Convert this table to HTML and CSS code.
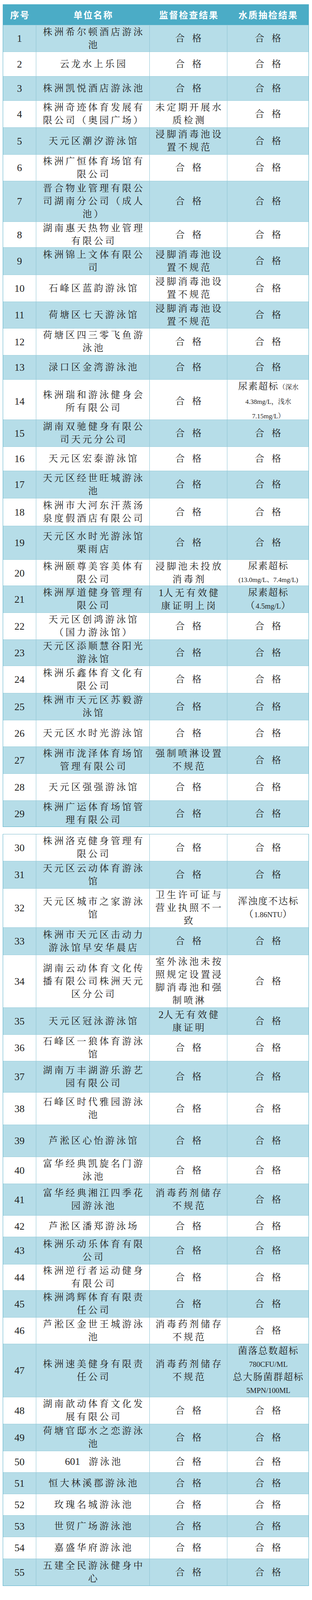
FILE: index.html
```html
<!DOCTYPE html>
<html lang="zh-CN">
<head>
<meta charset="utf-8">
<title>游泳场所监督检查结果</title>
<link rel="stylesheet" href="styles.css">
</head>
<body>
<div class="sheet">
<div class="tbl t1">
<div class="row head"><div class="c"><p>序号</p></div><div class="c"><p>单位名称</p></div><div class="c"><p>监督检查结果</p></div><div class="c"><p>水质抽检结果</p></div></div>
<div class="row odd h68"><div class="c no"><p>1</p></div><div class="c nm"><p>株洲希尔顿酒店游泳<br>池</p></div><div class="c ck"><p class="ok">合 格</p></div><div class="c wq"><p class="ok">合 格</p></div></div>
<div class="row h63"><div class="c no"><p>2</p></div><div class="c nm"><p>云龙水上乐园</p></div><div class="c ck"><p class="ok">合 格</p></div><div class="c wq"><p class="ok">合 格</p></div></div>
<div class="row odd h62"><div class="c no"><p>3</p></div><div class="c nm"><p>株洲凯悦酒店游泳池</p></div><div class="c ck"><p class="ok">合 格</p></div><div class="c wq"><p class="ok">合 格</p></div></div>
<div class="row h69"><div class="c no"><p>4</p></div><div class="c nm"><p>株洲奇迹体育发展有<br>限公司（奥园广场）</p></div><div class="c ck"><p>未定期开展水<br>质检测</p></div><div class="c wq"><p class="ok">合 格</p></div></div>
<div class="row odd h69"><div class="c no"><p>5</p></div><div class="c nm"><p>天元区潮汐游泳馆</p></div><div class="c ck"><p>浸脚消毒池设<br>置不规范</p></div><div class="c wq"><p class="ok">合 格</p></div></div>
<div class="row h68"><div class="c no"><p>6</p></div><div class="c nm"><p>株洲广恒体育场馆有<br>限公司</p></div><div class="c ck"><p class="ok">合 格</p></div><div class="c wq"><p class="ok">合 格</p></div></div>
<div class="row odd h104"><div class="c no"><p>7</p></div><div class="c nm"><p>晋合物业管理有限公<br>司湖南分公司（成人<br>池）</p></div><div class="c ck"><p class="ok">合 格</p></div><div class="c wq"><p class="ok">合 格</p></div></div>
<div class="row h66"><div class="c no"><p>8</p></div><div class="c nm"><p>湖南惠天热物业管理<br>有限公司</p></div><div class="c ck"><p class="ok">合 格</p></div><div class="c wq"><p class="ok">合 格</p></div></div>
<div class="row odd h70"><div class="c no"><p>9</p></div><div class="c nm"><p>株洲锦上文体有限公<br>司</p></div><div class="c ck"><p>浸脚消毒池设<br>置不规范</p></div><div class="c wq"><p class="ok">合 格</p></div></div>
<div class="row h69"><div class="c no"><p>10</p></div><div class="c nm"><p>石峰区蓝韵游泳馆</p></div><div class="c ck"><p>浸脚消毒池设<br>置不规范</p></div><div class="c wq"><p class="ok">合 格</p></div></div>
<div class="row odd h68"><div class="c no"><p>11</p></div><div class="c nm"><p>荷塘区七天游泳馆</p></div><div class="c ck"><p>浸脚消毒池设<br>置不规范</p></div><div class="c wq"><p class="ok">合 格</p></div></div>
<div class="row h69"><div class="c no"><p>12</p></div><div class="c nm"><p>荷塘区四三零飞鱼游<br>泳池</p></div><div class="c ck"><p class="ok">合 格</p></div><div class="c wq"><p class="ok">合 格</p></div></div>
<div class="row odd h62"><div class="c no"><p>13</p></div><div class="c nm"><p>渌口区金湾游泳池</p></div><div class="c ck"><p class="ok">合 格</p></div><div class="c wq"><p class="ok">合 格</p></div></div>
<div class="row h103"><div class="c no"><p>14</p></div><div class="c nm"><p>株洲瑞和游泳健身会<br>所有限公司</p></div><div class="c ck"><p class="ok">合 格</p></div><div class="c wq"><p class="tight">尿素超标<span class="sm">（深水</span><br><span class="sm">4.38mg/L，浅水</span><br><span class="sm">7.15mg/L）</span></p></div></div>
<div class="row odd h69"><div class="c no"><p>15</p></div><div class="c nm"><p>湖南双驰健身有限公<br>司天元分公司</p></div><div class="c ck"><p class="ok">合 格</p></div><div class="c wq"><p class="ok">合 格</p></div></div>
<div class="row h62"><div class="c no"><p>16</p></div><div class="c nm"><p>天元区宏泰游泳馆</p></div><div class="c ck"><p class="ok">合 格</p></div><div class="c wq"><p class="ok">合 格</p></div></div>
<div class="row odd h70"><div class="c no"><p>17</p></div><div class="c nm"><p>天元区经世旺城游泳<br>池</p></div><div class="c ck"><p class="ok">合 格</p></div><div class="c wq"><p class="ok">合 格</p></div></div>
<div class="row h71"><div class="c no"><p>18</p></div><div class="c nm"><p>株洲市大河东汗蒸汤<br>泉度假酒店有限公司</p></div><div class="c ck"><p class="ok">合 格</p></div><div class="c wq"><p class="ok">合 格</p></div></div>
<div class="row odd h86"><div class="c no"><p>19</p></div><div class="c nm"><p>天元区水时光游泳馆<br>栗雨店</p></div><div class="c ck"><p class="ok">合 格</p></div><div class="c wq"><p class="ok">合 格</p></div></div>
<div class="row h67"><div class="c no"><p>20</p></div><div class="c nm"><p>株洲颐尊美容美体有<br>限公司</p></div><div class="c ck"><p>浸脚池未投放<br>消毒剂</p></div><div class="c wq"><p>尿素超标<br><span class="sm">(13.0mg/L、7.4mg/L)</span></p></div></div>
<div class="row odd h69"><div class="c no"><p>21</p></div><div class="c nm"><p>株洲厚道健身管理有<br>限公司</p></div><div class="c ck"><p><span class="dg">1</span>人无有效健<br>康证明上岗</p></div><div class="c wq"><p>尿素超标<br>（<span class="lat">4.5mg/L</span>）</p></div></div>
<div class="row h69"><div class="c no"><p>22</p></div><div class="c nm"><p>天元区创鸿游泳馆<br>（国力游泳馆）</p></div><div class="c ck"><p class="ok">合 格</p></div><div class="c wq"><p class="ok">合 格</p></div></div>
<div class="row odd h67"><div class="c no"><p>23</p></div><div class="c nm"><p>天元区添顺慧谷阳光<br>游泳馆</p></div><div class="c ck"><p class="ok">合 格</p></div><div class="c wq"><p class="ok">合 格</p></div></div>
<div class="row h70"><div class="c no"><p>24</p></div><div class="c nm"><p>株洲乐鑫体育文化有<br>限公司</p></div><div class="c ck"><p class="ok">合 格</p></div><div class="c wq"><p class="ok">合 格</p></div></div>
<div class="row odd h69"><div class="c no"><p>25</p></div><div class="c nm"><p>株洲市天元区苏毅游<br>泳馆</p></div><div class="c ck"><p class="ok">合 格</p></div><div class="c wq"><p class="ok">合 格</p></div></div>
<div class="row h68"><div class="c no"><p>26</p></div><div class="c nm"><p>天元区水时光游泳馆</p></div><div class="c ck"><p class="ok">合 格</p></div><div class="c wq"><p class="ok">合 格</p></div></div>
<div class="row odd h69"><div class="c no"><p>27</p></div><div class="c nm"><p>株洲市泷泽体育场馆<br>管理有限公司</p></div><div class="c ck"><p>强制喷淋设置<br>不规范</p></div><div class="c wq"><p class="ok">合 格</p></div></div>
<div class="row h69"><div class="c no"><p>28</p></div><div class="c nm"><p>天元区强强游泳馆</p></div><div class="c ck"><p class="ok">合 格</p></div><div class="c wq"><p class="ok">合 格</p></div></div>
<div class="row odd h67 last"><div class="c no"><p>29</p></div><div class="c nm"><p>株洲广运体育场馆管<br>理有限公司</p></div><div class="c ck"><p class="ok">合 格</p></div><div class="c wq"><p class="ok">合 格</p></div></div>
</div>

<div class="tbl t2">
<div class="row h69"><div class="c no"><p>30</p></div><div class="c nm"><p>株洲洛克健身管理有<br>限公司</p></div><div class="c ck"><p class="ok">合 格</p></div><div class="c wq"><p class="ok">合 格</p></div></div>
<div class="row odd h70"><div class="c no"><p>31</p></div><div class="c nm"><p>天元区云动体育游泳<br>馆</p></div><div class="c ck"><p class="ok">合 格</p></div><div class="c wq"><p class="ok">合 格</p></div></div>
<div class="row h100"><div class="c no"><p>32</p></div><div class="c nm"><p>天元区城市之家游泳<br>馆</p></div><div class="c ck"><p>卫生许可证与<br>营业执照不一<br>致</p></div><div class="c wq"><p>浑浊度不达标<br>（<span class="lat">1.86NTU</span>）</p></div></div>
<div class="row odd h70"><div class="c no"><p>33</p></div><div class="c nm"><p>株洲市天元区击动力<br>游泳馆早安华晨店</p></div><div class="c ck"><p class="ok">合 格</p></div><div class="c wq"><p class="ok">合 格</p></div></div>
<div class="row h135"><div class="c no"><p>34</p></div><div class="c nm"><p>湖南云动体育文化传<br>播有限公司株洲天元<br>区分公司</p></div><div class="c ck"><p>室外泳池未按<br>照规定设置浸<br>脚消毒池和强<br>制喷淋</p></div><div class="c wq"><p class="ok">合 格</p></div></div>
<div class="row odd h69"><div class="c no"><p>35</p></div><div class="c nm"><p>天元区冠泳游泳馆</p></div><div class="c ck"><p><span class="dg">2</span>人无有效健<br>康证明</p></div><div class="c wq"><p class="ok">合 格</p></div></div>
<div class="row h68"><div class="c no"><p>36</p></div><div class="c nm"><p>石峰区一狼体育游泳<br>馆</p></div><div class="c ck"><p class="ok">合 格</p></div><div class="c wq"><p class="ok">合 格</p></div></div>
<div class="row odd h80"><div class="c no"><p>37</p></div><div class="c nm"><p>湖南万丰湖游乐游艺<br>园有限公司</p></div><div class="c ck"><p class="ok">合 格</p></div><div class="c wq"><p class="ok">合 格</p></div></div>
<div class="row h83"><div class="c no"><p>38</p></div><div class="c nm"><p>石峰区时代雅园游泳<br>池</p></div><div class="c ck"><p class="ok">合 格</p></div><div class="c wq"><p class="ok">合 格</p></div></div>
<div class="row odd h82"><div class="c no"><p>39</p></div><div class="c nm"><p>芦淞区心怡游泳馆</p></div><div class="c ck"><p class="ok">合 格</p></div><div class="c wq"><p class="ok">合 格</p></div></div>
<div class="row h69"><div class="c no"><p>40</p></div><div class="c nm"><p>富华经典凯旋名门游<br>泳池</p></div><div class="c ck"><p class="ok">合 格</p></div><div class="c wq"><p class="ok">合 格</p></div></div>
<div class="row odd h81"><div class="c no"><p>41</p></div><div class="c nm"><p>富华经典湘江四季花<br>园游泳池</p></div><div class="c ck"><p>消毒药剂储存<br>不规范</p></div><div class="c wq"><p class="ok">合 格</p></div></div>
<div class="row h55"><div class="c no"><p>42</p></div><div class="c nm"><p>芦淞区潘郑游泳场</p></div><div class="c ck"><p class="ok">合 格</p></div><div class="c wq"><p class="ok">合 格</p></div></div>
<div class="row odd h70"><div class="c no"><p>43</p></div><div class="c nm"><p>株洲乐动乐体育有限<br>公司</p></div><div class="c ck"><p class="ok">合 格</p></div><div class="c wq"><p class="ok">合 格</p></div></div>
<div class="row h67"><div class="c no"><p>44</p></div><div class="c nm"><p>株洲逆行者运动健身<br>有限公司</p></div><div class="c ck"><p class="ok">合 格</p></div><div class="c wq"><p class="ok">合 格</p></div></div>
<div class="row odd h69"><div class="c no"><p>45</p></div><div class="c nm"><p>株洲鸿辉体育有限责<br>任公司</p></div><div class="c ck"><p class="ok">合 格</p></div><div class="c wq"><p class="ok">合 格</p></div></div>
<div class="row h68"><div class="c no"><p>46</p></div><div class="c nm"><p>芦淞区金世王城游泳<br>池</p></div><div class="c ck"><p>消毒药剂储存<br>不规范</p></div><div class="c wq"><p class="ok">合 格</p></div></div>
<div class="row odd h136"><div class="c no"><p>47</p></div><div class="c nm"><p>株洲速美健身有限责<br>任公司</p></div><div class="c ck"><p>消毒药剂储存<br>不规范</p></div><div class="c wq"><p>菌落总数超标<br><span class="lat">780CFU/ML</span><br>总大肠菌群超标<br><span class="lat">5MPN/100ML</span></p></div></div>
<div class="row h69"><div class="c no"><p>48</p></div><div class="c nm"><p>湖南歆动体育文化发<br>展有限公司</p></div><div class="c ck"><p class="ok">合 格</p></div><div class="c wq"><p class="ok">合 格</p></div></div>
<div class="row odd h69"><div class="c no"><p>49</p></div><div class="c nm"><p>荷塘官邸水之恋游泳<br>池</p></div><div class="c ck"><p class="ok">合 格</p></div><div class="c wq"><p class="ok">合 格</p></div></div>
<div class="row h55"><div class="c no"><p>50</p></div><div class="c nm"><p><span class="dg">601</span>&nbsp;&nbsp;游泳池</p></div><div class="c ck"><p class="ok">合 格</p></div><div class="c wq"><p class="ok">合 格</p></div></div>
<div class="row odd h55"><div class="c no"><p>51</p></div><div class="c nm"><p>恒大林溪郡游泳池</p></div><div class="c ck"><p class="ok">合 格</p></div><div class="c wq"><p class="ok">合 格</p></div></div>
<div class="row h55"><div class="c no"><p>52</p></div><div class="c nm"><p>玫瑰名城游泳池</p></div><div class="c ck"><p class="ok">合 格</p></div><div class="c wq"><p class="ok">合 格</p></div></div>
<div class="row odd h55"><div class="c no"><p>53</p></div><div class="c nm"><p>世贸广场游泳池</p></div><div class="c ck"><p class="ok">合 格</p></div><div class="c wq"><p class="ok">合 格</p></div></div>
<div class="row h56"><div class="c no"><p>54</p></div><div class="c nm"><p>嘉盛华府游泳池</p></div><div class="c ck"><p class="ok">合 格</p></div><div class="c wq"><p class="ok">合 格</p></div></div>
<div class="row odd h69 last"><div class="c no"><p>55</p></div><div class="c nm"><p>五建全民游泳健身中<br>心</p></div><div class="c ck"><p class="ok">合 格</p></div><div class="c wq"><p class="ok">合 格</p></div></div>
</div>
</div>
</body>
</html>
```

FILE: styles.css
```css
* { box-sizing: border-box; }

body {
  margin: 0;
  background: #ffffff;
}

.sheet {
  padding: 11px 8px 0 7px;
}

.tbl {
  width: 785px;
  border-left: 1px solid #58afc7;
  border-right: 1px solid #58afc7;
}

.t2 {
  margin-top: 18px;
  border-top: 1px solid #7dbccd;
}

.row {
  display: grid;
  grid-template-columns: 85px 291px 199px 208px;
  border-bottom: 1px solid #99cddb;
  background: #ffffff;
}

.row.odd {
  background: #b6dde8;
}

.row.last {
  border-bottom-color: #58afc7;
}

.c {
  display: flex;
  align-items: center;
  justify-content: center;
  border-right: 1px solid #8ec4d3;
  min-width: 0;
}

.c:last-child {
  border-right: none;
}

.c p {
  margin: 0;
  text-align: center;
  white-space: nowrap;
  font-family: "Liberation Serif", "Noto Serif CJK SC", "Noto Sans CJK SC", serif;
  font-size: 24px;
  line-height: 33px;
  color: #222222;
  letter-spacing: 5px;
  padding-left: 5px;
}

.head {
  height: 54px;
  background: #4bacc6;
  border-bottom: 1px solid #a9d6e2;
}

.head .c {
  border-right: none;
}

.head .c p {
  font-family: "Noto Sans CJK SC", sans-serif;
  font-weight: 700;
  font-size: 23px;
  line-height: 1;
  color: #ffffff;
  letter-spacing: 2.5px;
  padding-left: 2px;
}

.no p {
  font-size: 26px;
  letter-spacing: 0;
  padding-left: 0;
}

.wq p {
  letter-spacing: 2px;
  padding-left: 2px;
}

.c p.ok {
  letter-spacing: 5px;
  word-spacing: 3px;
  padding-left: 5px;
}

.dg {
  font-size: 26px;
  letter-spacing: 0;
}

.sm {
  font-size: 17px;
  letter-spacing: 0;
}

.wq p.tight {
  line-height: 34px;
}

.lat {
  font-size: 19px;
  letter-spacing: 0;
}

.h55 { height: 55px; }
.h56 { height: 56px; }
.h62 { height: 62px; }
.h63 { height: 63px; }
.h66 { height: 66px; }
.h67 { height: 67px; }
.h68 { height: 68px; }
.h69 { height: 69px; }
.h70 { height: 70px; }
.h71 { height: 71px; }
.h80 { height: 80px; }
.h81 { height: 81px; }
.h82 { height: 82px; }
.h83 { height: 83px; }
.h86 { height: 86px; }
.h100 { height: 100px; }
.h103 { height: 103px; }
.h104 { height: 104px; }
.h135 { height: 135px; }
.h136 { height: 136px; }
```
